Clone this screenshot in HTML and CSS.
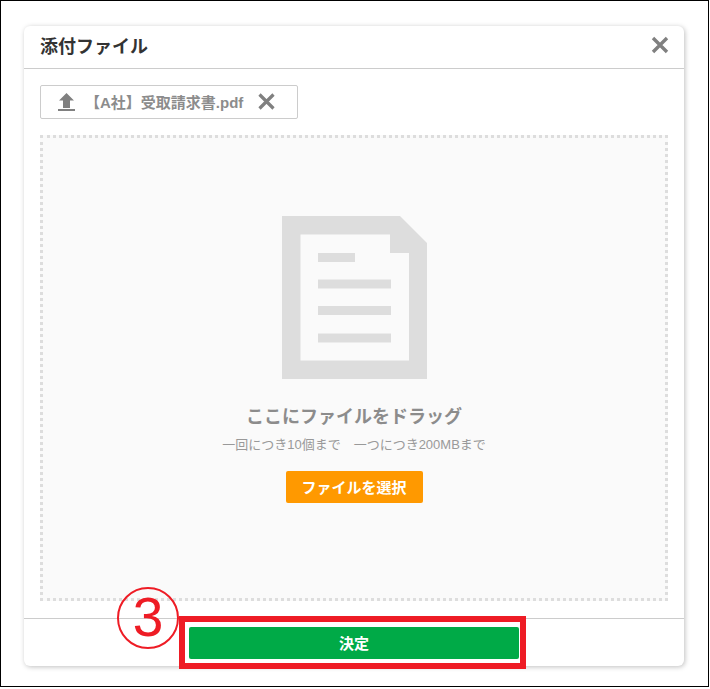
FILE: index.html
```html
<!DOCTYPE html>
<html lang="ja">
<head>
    <meta charset="UTF-8">
    <meta name="viewport" content="width=device-width, initial-scale=1.0">
    <title>添付ファイル</title>
    <link rel="stylesheet" href="styles.css">
</head>
<body>
    <div class="frame">
        <div class="dialog">
            <div class="dialog-header">
                <h1>添付ファイル</h1>
                <svg class="close-icon" width="18" height="18" viewBox="0 0 18 18">
                    <path d="M2 2 L16 16 M16 2 L2 16" stroke="#808080" stroke-width="3.4" fill="none"/>
                </svg>
            </div>

            <div class="dialog-body">
                <div class="file-chip">
                    <svg class="upload-icon" width="17" height="18" viewBox="0 0 17 18">
                        <path d="M8.500 0 L16 7.500 H12 V15 H5 V7.500 H1 Z" fill="#808080"/>
                        <rect x="0" y="16" width="17" height="2" fill="#808080"/>
                    </svg>
                    <span class="file-name">【A社】受取請求書.pdf</span>
                    <svg class="remove-icon" width="17" height="17" viewBox="0 0 17 17">
                        <path d="M1.500 1.500 L15.500 15.500 M15.500 1.500 L1.500 15.500" stroke="#808080" stroke-width="3.2" fill="none"/>
                    </svg>
                </div>

                <div class="drop-zone">
                    <svg class="doc-icon" width="145" height="163" viewBox="0 0 145 163">
                        <path fill="#dddddd" fill-rule="evenodd" d="M0 0 H118 L145 27 V163 H0 Z M18.500 18.500 V144.500 H127 V37 H108 V18.500 Z"/>
                        <rect x="36" y="37" width="37" height="9" fill="#dddddd"/>
                        <rect x="36" y="63.500" width="73" height="9" fill="#dddddd"/>
                        <rect x="36" y="90" width="73" height="9" fill="#dddddd"/>
                        <rect x="36" y="117.500" width="73" height="9" fill="#dddddd"/>
                    </svg>
                    <p class="drop-title">ここにファイルをドラッグ</p>
                    <p class="drop-note">一回につき10個まで　一つにつき200MBまで</p>
                    <button class="select-button">ファイルを選択</button>
                </div>
            </div>

            <div class="dialog-footer">
                <button class="ok-button">決定</button>
            </div>
        </div>

        <!-- 注釈 -->
        <div class="mark-box"></div>
        <div class="mark-number">3</div>
    </div>
</body>
</html>
```

FILE: styles.css
```css
* {
    box-sizing: border-box;
}
body {
    margin: 0;
    font-family: "Liberation Sans", "Noto Sans CJK JP", sans-serif;
    background-color: white;
}
.frame {
    position: relative;
    width: 709px;
    height: 687px;
    padding: 25px 23px 0;
    border: 1px solid black;
}
.dialog {
    width: 660px;
    height: 640px;
    display: flex;
    flex-direction: column;
    background: white;
    border-radius: 6px;
    box-shadow: 1px 1px 5px rgba(0, 0, 0, 0.25);
}
.dialog-header {
    display: flex;
    align-items: center;
    justify-content: space-between;
    height: 43px;
    padding: 0 15px 3px 16px;
    border-bottom: 1px solid #cccccc;
}
h1 {
    margin: 0;
    font-size: 18px;
    font-weight: bold;
    color: #333;
}
.dialog-body {
    flex: 1;
    padding: 16px 16px 17px;
}
.file-chip {
    display: flex;
    align-items: center;
    width: 258px;
    height: 34px;
    padding-left: 17px;
    border: 1px solid #cccccc;
    border-radius: 2px;
}
.file-name {
    margin-left: 10px;
    font-size: 15px;
    font-weight: bold;
    color: #8c8c8c;
    white-space: nowrap;
}
.remove-icon {
    margin-left: 15px;
}
.drop-zone {
    display: flex;
    flex-direction: column;
    align-items: center;
    height: 466px;
    margin-top: 16px;
    padding-top: 78px;
    background-color: #fafafa;
    border: 3px dotted #dddddd;
}
.drop-title {
    margin: 25px 0 0;
    font-size: 18px;
    line-height: 26px;
    font-weight: bold;
    color: #8c8c8c;
}
.drop-note {
    margin: 6px 0 0;
    font-size: 13px;
    line-height: 18px;
    color: #999;
}
.select-button {
    width: 137px;
    height: 32px;
    margin-top: 17px;
    padding: 0;
    background-color: #ff9900;
    color: white;
    border: none;
    border-radius: 2px;
    font-family: inherit;
    font-size: 15px;
    font-weight: bold;
}
.dialog-footer {
    display: flex;
    justify-content: center;
    height: 49px;
    padding-top: 8px;
    border-top: 1px solid #cccccc;
}
.ok-button {
    width: 330px;
    height: 32px;
    padding: 0;
    background-color: #00aa47;
    color: white;
    border: none;
    border-radius: 2px;
    font-family: inherit;
    font-size: 15px;
    font-weight: bold;
}
.mark-box {
    position: absolute;
    left: 178px;
    top: 615px;
    width: 347px;
    height: 53px;
    border: 6px solid #ee1c25;
}
.mark-number {
    position: absolute;
    left: 116px;
    top: 586px;
    width: 62px;
    height: 62px;
    border: 2px solid #ee1c25;
    border-radius: 50%;
    color: #ee1c25;
    font-size: 55px;
    line-height: 57px;
    text-align: center;
}
```
